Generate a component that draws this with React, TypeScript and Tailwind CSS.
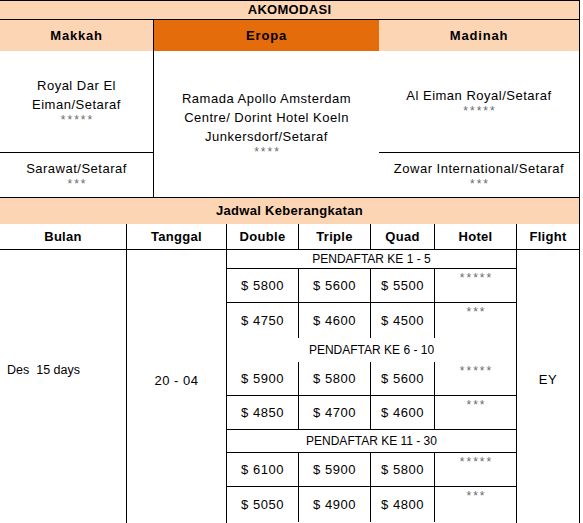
import React from "react";

const peach = "bg-[#fcd5b4]";

function Stars({ n }: { n: number }) {
  return (
    <div className="text-[12px] leading-[13px] tracking-[2px] text-[#6b6b6b] pl-[2px]">
      {"*".repeat(n)}
    </div>
  );
}

function PriceRow({ prices, stars, bottom }: { prices: string[]; stars: number; bottom: boolean }) {
  return (
    <div className={`flex ${bottom ? "h-[34px] border-b border-black" : "h-[35px]"}`}>
      <div className="w-[72px] border-r border-black flex items-center justify-center">{prices[0]}</div>
      <div className="w-[72px] border-r border-black flex items-center justify-center">{prices[1]}</div>
      <div className="w-[64px] border-r border-black flex items-center justify-center">{prices[2]}</div>
      <div className="flex-1 flex justify-center pt-[3px]">
        <Stars n={stars} />
      </div>
    </div>
  );
}

function Group({ label, labelClass, rows }: {
  label: string;
  labelClass: string;
  rows: { prices: string[]; stars: number; bottom: boolean }[];
}) {
  return (
    <>
      <div className={`flex items-center justify-center text-[12px] tracking-normal ${labelClass}`}>{label}</div>
      {rows.map((r, i) => (
        <PriceRow key={i} {...r} />
      ))}
    </>
  );
}

export default function App() {
  return (
    <div
      className="w-[580px] bg-white text-black text-[13px] tracking-[0.5px] border-t border-r border-black"
      style={{ fontFamily: '"Liberation Sans", Arial, sans-serif' }}
    >
      {/* Akomodasi */}
      <div className={`${peach} h-[19px] border-b border-black flex items-center justify-center font-bold tracking-[0.3px]`}>
        AKOMODASI
      </div>
      <div className="flex h-[31px] font-bold tracking-[0.8px]">
        <div className={`${peach} w-[154px] border-r border-black flex items-center justify-center`}>Makkah</div>
        <div className="bg-[#e46c0a] w-[225px] flex items-center justify-center">Eropa</div>
        <div className={`${peach} flex-1 flex items-center justify-center`}>Madinah</div>
      </div>
      <div className="flex h-[147px] border-b border-black text-center leading-[19px]">
        <div className="w-[154px] border-r border-black flex flex-col">
          <div className="h-[102px] border-b border-black flex flex-col items-center justify-center">
            <div>Royal Dar El</div>
            <div>Eiman/Setaraf</div>
            <Stars n={5} />
          </div>
          <div className="flex-1 flex flex-col items-center justify-center">
            <div>Sarawat/Setaraf</div>
            <Stars n={3} />
          </div>
        </div>
        <div className="w-[225px] flex flex-col items-center justify-center">
          <div>Ramada Apollo Amsterdam</div>
          <div>Centre/ Dorint Hotel Koeln</div>
          <div>Junkersdorf/Setaraf</div>
          <Stars n={4} />
        </div>
        <div className="flex-1 flex flex-col">
          <div className="h-[102px] border-b border-black flex flex-col items-center justify-center">
            <div>Al Eiman Royal/Setaraf</div>
            <Stars n={5} />
          </div>
          <div className="flex-1 flex flex-col items-center justify-center">
            <div>Zowar International/Setaraf</div>
            <Stars n={3} />
          </div>
        </div>
      </div>

      {/* Jadwal */}
      <div className={`${peach} h-[26px] flex items-center justify-center font-bold tracking-[0.3px]`}>
        Jadwal Keberangkatan
      </div>
      <div className="flex h-[26px] border-b border-black font-bold tracking-[0.3px]">
        <div className="w-[127px] border-r border-black flex items-center justify-center">Bulan</div>
        <div className="w-[100px] border-r border-black flex items-center justify-center">Tanggal</div>
        <div className="w-[72px] border-r border-black flex items-center justify-center">Double</div>
        <div className="w-[72px] border-r border-black flex items-center justify-center">Triple</div>
        <div className="w-[64px] border-r border-black flex items-center justify-center">Quad</div>
        <div className="w-[82px] border-r border-black flex items-center justify-center">Hotel</div>
        <div className="flex-1 flex items-center justify-center">Flight</div>
      </div>
      <div className="flex h-[290px]">
        <div className="w-[127px] border-r border-black pl-[7px] pt-[112px] leading-[16px] tracking-normal text-[12.5px] whitespace-pre">
          {"Des  15 days"}
        </div>
        <div className="w-[100px] border-r border-black pt-[123px] leading-[16px] text-center">20 - 04</div>
        <div className="w-[290px] border-r border-black flex flex-col">
          <Group
            label="PENDAFTAR KE 1 - 5"
            labelClass="h-[19px] border-b border-black"
            rows={[
              { prices: ["$ 5800", "$ 5600", "$ 5500"], stars: 5, bottom: true },
              { prices: ["$ 4750", "$ 4600", "$ 4500"], stars: 3, bottom: false },
            ]}
          />
          <Group
            label="PENDAFTAR KE 6 - 10"
            labelClass="h-[24px]"
            rows={[
              { prices: ["$ 5900", "$ 5800", "$ 5600"], stars: 5, bottom: true },
              { prices: ["$ 4850", "$ 4700", "$ 4600"], stars: 3, bottom: true },
            ]}
          />
          <Group
            label="PENDAFTAR KE 11 - 30"
            labelClass="h-[23px] border-b border-black"
            rows={[
              { prices: ["$ 6100", "$ 5900", "$ 5800"], stars: 5, bottom: true },
              { prices: ["$ 5050", "$ 4900", "$ 4800"], stars: 3, bottom: false },
            ]}
          />
        </div>
        <div className="flex-1 pt-[122px] leading-[16px] text-center">EY</div>
      </div>
    </div>
  );
}
